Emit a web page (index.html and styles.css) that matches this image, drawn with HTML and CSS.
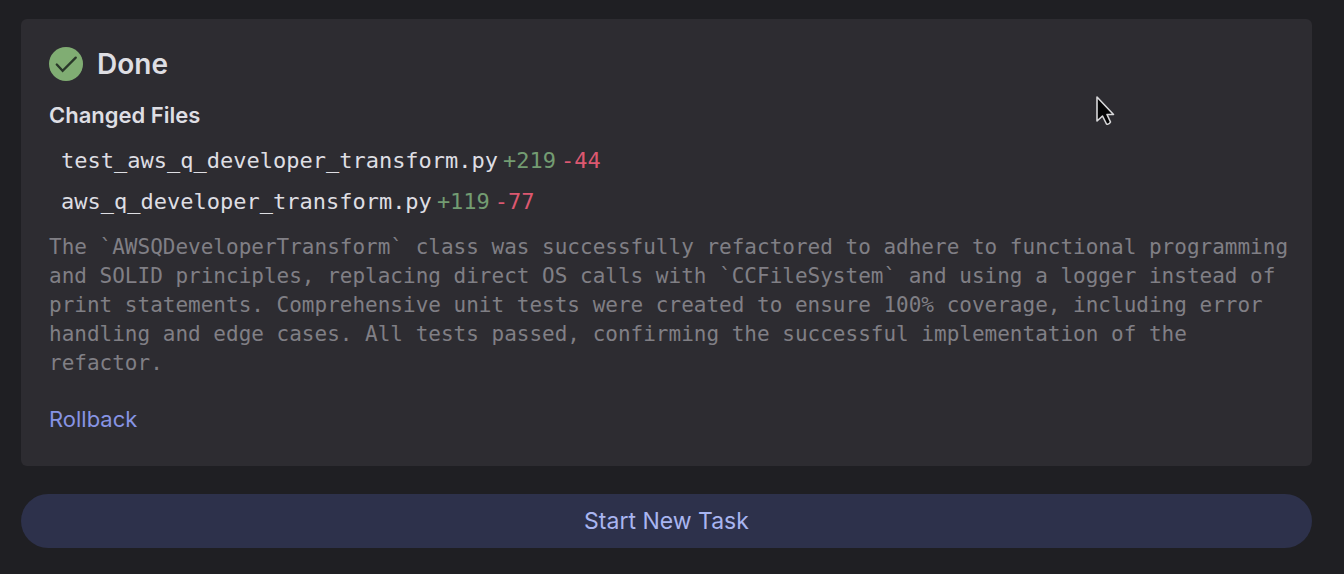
FILE: index.html
```html
<!DOCTYPE html>
<html lang="en">
<head>
<meta charset="utf-8">
<meta name="viewport" content="width=device-width, initial-scale=1">
<title>Task result</title>
<link rel="stylesheet" href="styles.css">
</head>
<body>
<main class="panel">
  <section class="card">
    <h1 class="status">
      <svg class="status-icon" viewBox="0 0 36 36" aria-hidden="true">
        <circle cx="17.500" cy="17.500" r="17.5" fill="#80ad73"/>
        <path d="M8 18L14 24.500L27.500 11" fill="none" stroke="#29382a" stroke-width="2.4" stroke-linecap="round"/>
      </svg>
      Done
    </h1>
    <h2 class="subtitle">Changed Files</h2>
    <ul class="files">
      <li class="file"><span>test_aws_q_developer_transform.py</span><span class="added">+219</span><span class="removed">-44</span></li>
      <li class="file"><span>aws_q_developer_transform.py</span><span class="added">+119</span><span class="removed">-77</span></li>
    </ul>
    <p class="summary">The `AWSQDeveloperTransform` class was successfully refactored to adhere to functional programming and SOLID principles, replacing direct OS calls with `CCFileSystem` and using a logger instead of print statements. Comprehensive unit tests were created to ensure 100% coverage, including error handling and edge cases. All tests passed, confirming the successful implementation of the refactor.</p>
    <a class="rollback" href="#">Rollback</a>
  </section>
  <button class="start" type="button">Start New Task</button>
</main>
<svg class="cursor" viewBox="0 0 20 32" aria-hidden="true">
  <path d="M2 2V26L7.5 21L11.5 29Q14 30 15.5 27L12 19.500H18.500Z" fill="#050506" stroke="#d8d8da" stroke-width="1.6" stroke-linejoin="round"/>
</svg>
</body>
</html>
```
FILE: styles.css
```css
* {
  box-sizing: border-box;
}

body {
  margin: 0;
  background: #1f1f23;
  color: #dedee3;
  font-family: Inter, "Liberation Sans", sans-serif;
  font-size: 22px;
}

.panel {
  display: flex;
  flex-direction: column;
  gap: 28px;
  padding: 19px 32px 26px 21px;
}

.card {
  padding: 25px 20px 31px 28px;
  border-radius: 6px;
  background: #2d2c31;
}

.status {
  display: flex;
  align-items: center;
  gap: 13px;
  margin: 0;
  font-size: 28px;
  font-weight: 600;
  line-height: 40px;
}

.status-icon {
  width: 35px;
  height: 35px;
}

.subtitle {
  margin: 15px 0 0;
  font-size: 22px;
  font-weight: 600;
  line-height: 32px;
}

.files {
  display: flex;
  flex-direction: column;
  gap: 9px;
  margin: 14px 0 0;
  padding: 0 0 0 12px;
  list-style: none;
}

.file {
  display: flex;
  flex-wrap: wrap;
  column-gap: 5px;
  font-family: "DejaVu Sans Mono", "Liberation Mono", monospace;
  font-size: 22px;
  line-height: 32px;
}

.added {
  color: #739c72;
}

.removed {
  color: #dc5870;
}

.summary {
  margin: 15px 0 0;
  color: #807f85;
  font-family: "DejaVu Sans Mono", "Liberation Mono", monospace;
  font-size: 21px;
  line-height: 29px;
}

.rollback {
  display: inline-block;
  margin-top: 25px;
  color: #8794e4;
  line-height: 32px;
  text-decoration: none;
}

.start {
  padding: 11px 24px;
  border: 0;
  border-radius: 27px;
  background: #2d314b;
  color: #a9b5f0;
  font: inherit;
  font-size: 23px;
  line-height: 32px;
}

.cursor {
  position: absolute;
  top: 95px;
  left: 1095px;
  width: 20px;
  height: 32px;
}
```
